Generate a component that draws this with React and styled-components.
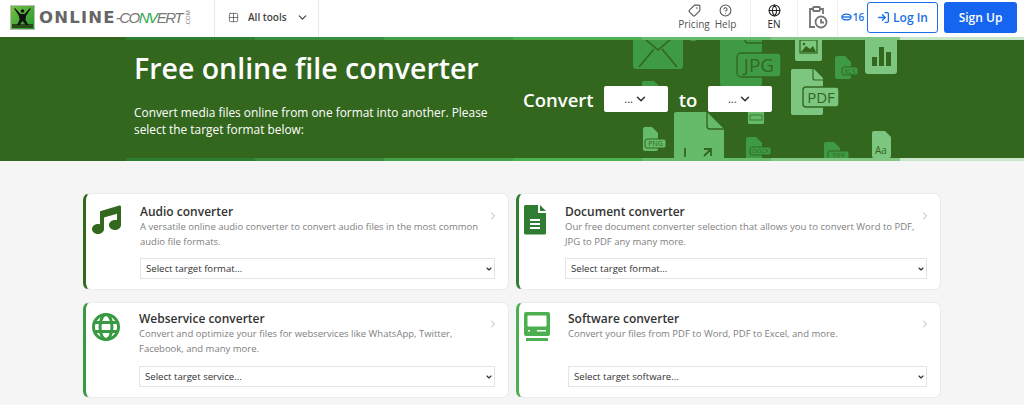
import React from 'react';
import styled, { createGlobalStyle } from 'styled-components';
import { ChevronDown, ChevronRight, Tag, CircleHelp, Globe, LogIn, Grid2x2 } from 'lucide-react';

const strip = ['#33671e', '#2e7d32', '#388e3c', '#43a047', '#4caf50', '#66bb6a', '#81c784', '#c8e6c9'];

const cards = [
    {
        title: 'Audio converter',
        text: 'A versatile online audio converter to convert audio files in the most common audio file formats.',
        placeholder: 'Select target format...',
        color: '#33691e',
        Icon: NoteIcon,
        indent: 49
    },
    {
        title: 'Document converter',
        text: 'Our free document converter selection that allows you to convert Word to PDF, JPG to PDF any many more.',
        placeholder: 'Select target format...',
        color: '#2e7d32',
        Icon: DocIcon,
        indent: 41
    },
    {
        title: 'Webservice converter',
        text: 'Convert and optimize your files for webservices like WhatsApp, Twitter, Facebook, and many more.',
        placeholder: 'Select target service...',
        color: '#3a9a44',
        Icon: GlobeIcon,
        indent: 48,
        lower: true
    },
    {
        title: 'Software converter',
        text: 'Convert your files from PDF to Word, PDF to Excel, and more.',
        placeholder: 'Select target software...',
        color: '#4caf50',
        Icon: ScreenIcon,
        indent: 44,
        lower: true
    }
];

function NoteIcon({ color }) {
    return (
        <svg width="30" height="30" viewBox="0 0 30 30">
            <path
                fill={color}
                d="M9 6.2 28.300.6A1.400 1.400 0 0 1 30 2v18c0 2.800-2.700 5-6 5s-6-2.200-6-5 2.700-5 6-5c.7 0 1.400.1 2 .3V8.800l-13 3.600V24c0 2.800-2.700 5-6 5s-6-2.200-6-5 2.700-5 6-5c.7 0 1.400.1 2 .3z"
            />
        </svg>
    );
}

function DocIcon({ color }) {
    return (
        <svg width="23" height="30" viewBox="0 0 23 30">
            <path fill={color} d="M1.500 0H14v8h8v20a1.500 1.500 0 0 1-1.500 1.500h-19A1.500 1.500 0 0 1 0 28V1.500A1.500 1.500 0 0 1 1.500 0zM16 0l6 6h-6z" />
            <path stroke="#fff" strokeWidth="1.800" d="M6 15h10M6 19h10M6 23h10" />
        </svg>
    );
}

function GlobeIcon({ color }) {
    return (
        <svg width="30" height="30" viewBox="0 0 30 30" fill="none" stroke={color} strokeWidth="3">
            <circle cx="15" cy="15" r="12.500" />
            <ellipse cx="15" cy="15" rx="6" ry="12.500" />
            <path d="M3 10.500h24M3 19.500h24" />
        </svg>
    );
}

function ScreenIcon({ color }) {
    return (
        <svg width="27" height="30" viewBox="0 0 27 30">
            <rect fill={color} width="26" height="24" rx="2" />
            <rect fill="#fff" x="3.500" y="3.500" width="19" height="11" rx="1" />
            <rect fill="#fff" x="13" y="18" width="9" height="1.500" />
            <rect fill="#fff" x="4" y="18" width="2" height="1.500" />
            <rect fill={color} x="2" y="26" width="22" height="3" />
        </svg>
    );
}

function FileShape({ x, y, w, h, fill, fold = 9 }) {
    const d = `M${x + 2} ${y}H${x + w - fold}L${x + w} ${y + fold}V${y + h - 2}a2 2 0 0 1-2 2H${x + 2}a2 2 0 0 1-2-2V${y + 2}a2 2 0 0 1 2-2z`;
    return <path fill={fill} d={d} />;
}

function FileLabel({ x, y, w, h, text, size, stroke, fill }) {
    return (
        <g>
            <rect x={x} y={y} width={w} height={h} rx="2" fill={fill} stroke={stroke} strokeWidth="1" />
            <text x={x + w / 2} y={y + h / 2 + size * 0.36} fontSize={size} textAnchor="middle" fill={stroke}>
                {text}
            </text>
        </g>
    );
}

// hero background, coordinates are relative to the hero box
function HeroArt() {
    const mid = '#3f9a46';
    const soft = '#66bb6a';
    const pale = '#7cc67f';
    const dark = '#33671e';
    return (
        <ArtSvg width="1024" height="124" viewBox="0 0 1024 124">
            <rect x="633" y="-4" width="50" height="36" rx="3" fill={mid} />
            <path d="M639 -3 658 13 677 -3M639 30 654 12M677 30 662 12" stroke={dark} strokeWidth="1.600" fill="none" />
            <rect x="690" y="-4" width="6" height="8" rx="1" fill={mid} />
            <FileShape x={642} y={44} w={18} h={24} fill={mid} fold={6} />

            <rect x="720" y="-4" width="42" height="54" rx="4" fill={mid} />
            <path d="M745 -4 v7 a3 3 0 0 0 3 3 h14" stroke={dark} strokeWidth="1.400" fill="none" />
            <rect x="737" y="16" width="44" height="24" rx="4" fill={mid} stroke={dark} strokeWidth="1.400" />
            <text x="759" y="35" fontSize="19" textAnchor="middle" fill={dark}>JPG</text>

            <rect x="748" y="72" width="16" height="15" rx="1" fill={soft} />
            <rect x="750" y="78" width="12" height="5" fill="none" stroke={dark} strokeWidth=".8" />

            <rect x="795" y="-4" width="27" height="28" rx="2" fill={pale} />
            <rect x="800" y="3" width="17" height="13" fill="none" stroke={dark} strokeWidth="1.300" />
            <path d="M801 15 806 9 810 12 813 9 816 15z" fill={dark} />
            <circle cx="804" cy="7" r="1.300" fill={dark} />

            <FileShape x={835} y={19} w={16} h={23} fill={mid} fold={6} />
            <FileLabel x={842} y={30} w={16} h={8} text="XLS" size={7} stroke={dark} fill={mid} />

            <rect x="865" y="-4" width="32" height="41" rx="3" fill={pale} />
            <rect x="872" y="20" width="5" height="9" fill={dark} />
            <rect x="879" y="10" width="5" height="19" fill={dark} />
            <rect x="886" y="15" width="5" height="14" fill={dark} />

            <FileShape x={791} y={32} w={32} h={46} fill={pale} />
            <path d="M813 32v9a2 2 0 0 0 2 2h8" stroke={dark} strokeWidth="1.200" fill="none" />
            <rect x="803" y="50" width="36" height="20" rx="3" fill={pale} stroke={dark} strokeWidth="1.400" />
            <text x="821" y="66" fontSize="15" textAnchor="middle" fill={dark}>PDF</text>

            <FileShape x={746} y={100} w={16} h={30} fill={mid} fold={6} />
            <FileLabel x={750} y={110} w={21} h={8} text="DOCX" size={6} stroke={dark} fill={mid} />
            <FileShape x={824} y={105} w={16} h={24} fill={mid} fold={6} />
            <FileLabel x={828} y={114} w={21} h={9} text="TIFF" size={7} stroke={dark} fill={mid} />

            <FileShape x={872} y={94} w={19} h={27} fill={pale} fold={6} />
            <text x="881" y="117" fontSize="10" textAnchor="middle" fill={dark}>Aa</text>

            <FileShape x={643} y={90} w={15} h={24} fill={soft} fold={6} />
            <FileLabel x={645} y={102} w={21} h={9} text="PNG" size={7} stroke={dark} fill={soft} />

            <FileShape x={674} y={75} w={50} h={60} fill={soft} fold={17} />
            <path d="M707 75v14a3 3 0 0 0 3 3h14" stroke={dark} strokeWidth="1.400" fill="none" />
            <path d="M685 111v9M704 112h7v7M711 112l-7 7" stroke={dark} strokeWidth="1.800" fill="none" />
        </ArtSvg>
    );
}

function Logo() {
    return (
        <LogoBox>
            <svg width="25" height="25" viewBox="0 0 25 25">
                <defs>
                    <linearGradient id="logoBg" x1="0" y1="0" x2="1" y2="1">
                        <stop offset="0" stopColor="#7bc043" />
                        <stop offset="1" stopColor="#1f9a2e" />
                    </linearGradient>
                </defs>
                <rect x=".5" y=".5" width="24" height="24" fill="url(#logoBg)" stroke="#bdbdbd" />
                <rect x="2" y="19" width="21" height="4" fill="#274d17" />
                <circle cx="12.500" cy="6" r="1.800" fill="#111" />
                <path d="M5 3 10.500 9h4L20 3l.7.7L16 11l-.5 4 3 5h-2.500L12.500 16 9.500 20H7l2.500-5-.5-4L4.300 3.700z" fill="#111" />
            </svg>
            <LogoWord>
                ONLINE<LogoLight>-CO<LogoGreen>NV</LogoGreen>ERT</LogoLight>
            </LogoWord>
            <LogoCom>.COM</LogoCom>
        </LogoBox>
    );
}

export default function App() {
    return (
        <Page>
            <GlobalStyle />
            <Header>
                <Logo />
                <ToolsMenu>
                    <Grid2x2 size={11} strokeWidth={1.500} />
                    <span>All tools</span>
                    <ChevronDown size={13} strokeWidth={2.200} />
                </ToolsMenu>
                <HeaderRight>
                    <NavItem $width={32}>
                        <PriceTag size={13} strokeWidth={2} />
                        <span>Pricing</span>
                    </NavItem>
                    <NavItem $width={31}>
                        <CircleHelp size={13} strokeWidth={2} />
                        <span>Help</span>
                    </NavItem>
                    <LangItem>
                        <Globe size={13} strokeWidth={2} />
                        <span>EN</span>
                    </LangItem>
                    <HistoryItem>
                        <svg width="20" height="24" viewBox="0 0 20 24" fill="none" stroke="#757575" strokeWidth="1.800">
                            <path d="M6 3H2v18h5" />
                            <path d="M11 3h4v5" />
                            <rect x="5" y="1" width="7" height="4" rx="1" />
                            <circle cx="13" cy="16" r="5.500" />
                            <path d="M13 13v3.500h3" />
                        </svg>
                    </HistoryItem>
                    <Credits>
                        <svg width="11" height="8" viewBox="0 0 12 8" fill="none" stroke="#1a6fe8" strokeWidth="1.500">
                            <ellipse cx="6" cy="4" rx="5" ry="3.200" />
                            <path d="M1 4h10" />
                        </svg>
                        16
                    </Credits>
                    <LoginButton>
                        <LogIn size={13} strokeWidth={2.400} />
                        Log In
                    </LoginButton>
                    <SignupButton>Sign Up</SignupButton>
                </HeaderRight>
            </Header>
            <Hero>
                <HeroArt />
                <Strip>
                    {strip.map((c) => (
                        <StripPart key={c} $color={c} />
                    ))}
                </Strip>
                <HeroBody>
                    <HeroText>
                        <HeroTitle>Free online file converter</HeroTitle>
                        <HeroSub>Convert media files online from one format into another. Please select the target format below:</HeroSub>
                    </HeroText>
                    <ConvertRow>
                        Convert
                        <FormatPick>
                            <span>...</span>
                            <ChevronDown size={14} strokeWidth={2.600} />
                        </FormatPick>
                        to
                        <FormatPick>
                            <span>...</span>
                            <ChevronDown size={14} strokeWidth={2.600} />
                        </FormatPick>
                    </ConvertRow>
                </HeroBody>
                <Strip>
                    {strip.map((c) => (
                        <StripPart key={c} $color={c} />
                    ))}
                </Strip>
            </Hero>
            <CardGrid>
                {cards.map((card) => (
                    <Card key={card.title} $color={card.color} $lower={card.lower}>
                        <IconCol>
                            <card.Icon color={card.color} />
                        </IconCol>
                        <CardBody $indent={card.indent}>
                            <CardTitle>{card.title}</CardTitle>
                            <CardText>{card.text}</CardText>
                            <SelectWrap>
                                <TargetSelect defaultValue="">
                                    <option value="">{card.placeholder}</option>
                                </TargetSelect>
                                <SelectChevron size={8} strokeWidth={3.500} />
                            </SelectWrap>
                        </CardBody>
                        <CardArrow $lower={card.lower}>
                            <ChevronRight size={12} strokeWidth={1.500} />
                        </CardArrow>
                    </Card>
                ))}
            </CardGrid>
        </Page>
    );
}

// ---------------------------STYLES-------------------------------------------//

const GlobalStyle = createGlobalStyle`
    * {
        box-sizing: border-box;
    }
    body {
        margin: 0;
        background: #f5f5f5;
        font-family: 'Open Sans', 'Liberation Sans', sans-serif;
        color: #333;
        overflow: hidden;
    }
`;

const Page = styled.div`
    width: 1024px;
    height: 405px;
    overflow: hidden;
`;

const Header = styled.header`
    height: 37px;
    background: #fff;
    display: flex;
    align-items: stretch;
`;

const LogoBox = styled.div`
    width: 215px;
    flex: none;
    padding: 5px 0 0 10px;
    display: flex;
    align-items: flex-start;
    border-right: 1px solid #e8e8e8;
`;

const LogoWord = styled.div`
    margin: 4px 0 0 4px;
    font-family: 'DejaVu Sans', sans-serif;
    font-weight: 700;
    font-size: 16.500px;
    line-height: 18px;
    letter-spacing: 1.200px;
    color: #666;
    white-space: nowrap;
`;

const LogoLight = styled.span`
    font-family: 'Liberation Sans', sans-serif;
    font-weight: 400;
    font-style: italic;
    font-size: 15px;
    letter-spacing: -1.500px;
    color: #777;
`;

const LogoGreen = styled.span`
    color: #2fa84f;
`;

const LogoCom = styled.div`
    margin: 8px 0 0 3px;
    width: 6px;
    height: 13px;
    font-family: 'Liberation Sans', sans-serif;
    font-size: 6px;
    line-height: 6px;
    color: #777;
    writing-mode: vertical-rl;
    transform: rotate(180deg);
`;

const ToolsMenu = styled.div`
    width: 104px;
    flex: none;
    padding: 0 0 3px 13px;
    display: flex;
    align-items: center;
    gap: 9px;
    font-size: 10px;
    font-weight: 600;
    white-space: nowrap;
    color: #444;
    border-right: 1px solid #e8e8e8;
`;

const HeaderRight = styled.div`
    margin-left: auto;
    display: flex;
    align-items: stretch;
    padding-right: 7px;
`;

const NavItem = styled.div`
    width: ${(p) => p.$width}px;
    display: flex;
    flex-direction: column;
    align-items: center;
    padding-top: 4px;
    font-size: 10px;
    line-height: 14px;
    color: #555;
`;

const PriceTag = styled(Tag)`
    transform: scaleX(-1);
`;

const LangItem = styled(NavItem)`
    width: 48px;
    margin-left: 9px;
    border-left: 1px solid #eee;
    border-right: 1px solid #eee;
    color: #222;
`;

const HistoryItem = styled.div`
    width: 40px;
    padding-bottom: 2px;
    display: flex;
    align-items: center;
    justify-content: center;
    border-right: 1px solid #eee;
`;

const Credits = styled.div`
    width: 29px;
    padding-bottom: 3px;
    display: flex;
    align-items: center;
    justify-content: center;
    gap: 1px;
    font-size: 10px;
    font-weight: 600;
    color: #1a6fe8;
`;

const LoginButton = styled.div`
    width: 71px;
    height: 31px;
    margin: 2px 6px 0 0;
    display: flex;
    align-items: center;
    justify-content: center;
    gap: 3px;
    background: #fff;
    border: 1px solid #1a6fe8;
    border-radius: 3px;
    font-size: 12px;
    font-weight: 600;
    color: #1a6fe8;
`;

const SignupButton = styled.div`
    width: 73px;
    height: 31px;
    margin-top: 2px;
    display: flex;
    align-items: center;
    justify-content: center;
    background: #1565f0;
    border-radius: 3px;
    font-size: 12px;
    font-weight: 600;
    color: #fff;
`;

const Hero = styled.section`
    position: relative;
    height: 124px;
    background: #33671e;
    display: flex;
    flex-direction: column;
    overflow: hidden;
`;

const ArtSvg = styled.svg`
    position: absolute;
    left: 0;
    top: 0;
    font-family: 'Open Sans', sans-serif;
`;

const Strip = styled.div`
    position: relative;
    height: 3px;
    flex: none;
    display: grid;
    grid-template-columns: 126px repeat(6, 129px) 1fr;
`;

const StripPart = styled.div`
    background: ${(p) => p.$color};
`;

const HeroBody = styled.div`
    position: relative;
    flex: 1;
    display: flex;
    padding-left: 134px;
`;

const HeroText = styled.div`
    width: 389px;
    flex: none;
    padding-top: 8px;
    color: #fff;
`;

const HeroTitle = styled.h1`
    margin: 0;
    font-size: 28.500px;
    line-height: 40px;
    font-weight: 600;
`;

const HeroSub = styled.p`
    width: 372px;
    margin: 16px 0 0;
    font-size: 11.900px;
    line-height: 17px;
`;

const ConvertRow = styled.div`
    height: 26px;
    margin-top: 46px;
    display: flex;
    align-items: center;
    font-size: 18.500px;
    font-weight: 600;
    color: #fff;
`;

const FormatPick = styled.div`
    width: 64px;
    height: 26px;
    margin: 0 10.500px;
    display: flex;
    align-items: center;
    justify-content: center;
    gap: 1px;
    background: #fff;
    border-radius: 2px;
    font-size: 11px;
    font-weight: 400;
    color: #333;

    span {
        margin-bottom: 1px;
    }
`;

const CardGrid = styled.main`
    margin: 32px 0 0 83px;
    width: 858px;
    display: grid;
    grid-template-columns: 426px 425px;
    grid-template-rows: 97px 96px;
    gap: 12px 7px;
`;

const Card = styled.article`
    position: relative;
    display: flex;
    background: #fff;
    border: 1px solid #ebebeb;
    border-left: 3px solid ${(p) => p.$color};
    border-radius: 7px;
    padding: ${(p) => (p.$lower ? 9 : 11)}px 13px 10px 5px;
`;

const IconCol = styled.div`
    flex: none;
    width: 0;
`;

const CardBody = styled.div`
    flex: 1;
    min-width: 0;
    display: flex;
    flex-direction: column;
    padding-left: ${(p) => p.$indent}px;
`;

const CardTitle = styled.h3`
    margin: 0;
    font-size: 12px;
    line-height: 14px;
    font-weight: 600;
    color: #333;
`;

const CardText = styled.p`
    margin: 0;
    font-size: 9.500px;
    line-height: 15px;
    color: #808080;
`;

const SelectWrap = styled.div`
    position: relative;
    margin-top: auto;
`;

const TargetSelect = styled.select`
    display: block;
    width: 100%;
    height: 21px;
    padding: 0 5px;
    appearance: none;
    background: #fff;
    border: 1px solid #e4e4e4;
    border-radius: 0;
    font-family: inherit;
    font-size: 9.600px;
    color: #333;
`;

const SelectChevron = styled(ChevronDown)`
    position: absolute;
    right: 2px;
    top: 7px;
    color: #333;
    pointer-events: none;
`;

const CardArrow = styled.div`
    position: absolute;
    top: ${(p) => (p.$lower ? 10 : 11)}px;
    right: 9px;
    color: #999;
`;
